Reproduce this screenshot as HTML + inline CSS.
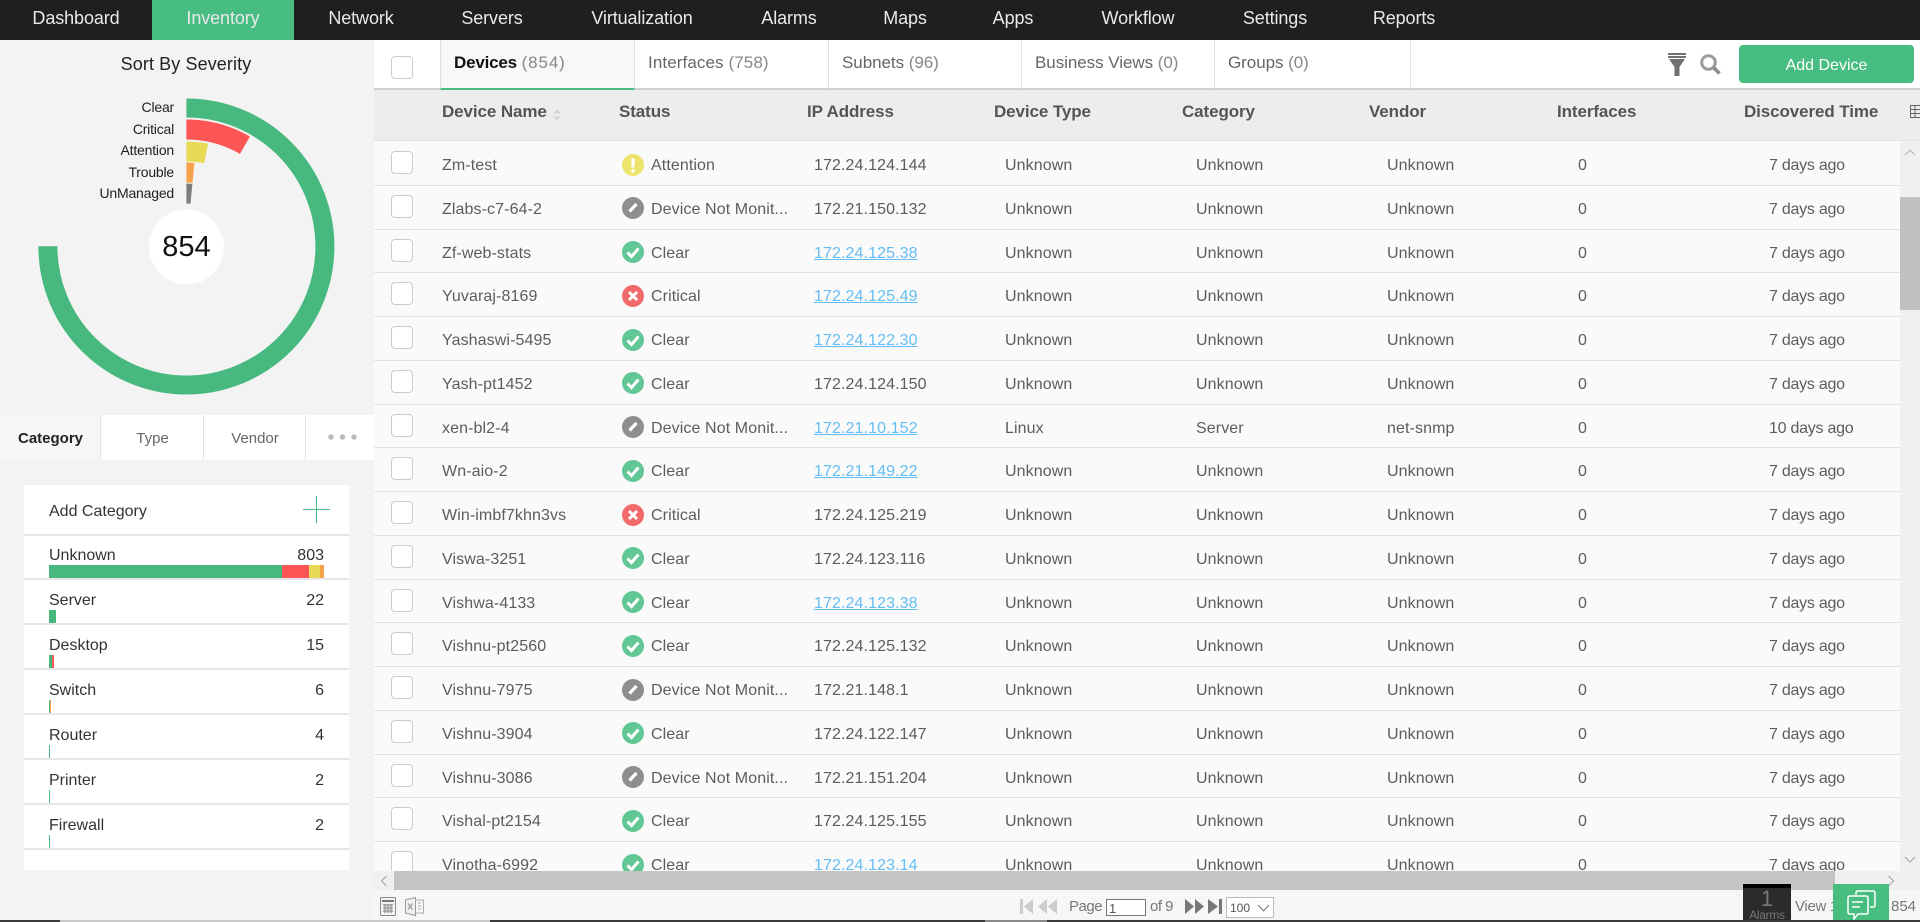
<!DOCTYPE html>
<html><head><meta charset="utf-8"><title>Inventory</title>
<style>
*{box-sizing:border-box}
html,body{margin:0;padding:0;width:1920px;height:922px;overflow:hidden;background:#f5f5f5;font-family:"Liberation Sans",sans-serif;color:#555}
.abs{position:absolute;white-space:nowrap}
#nav{left:0;top:0;width:1920px;height:40px;background:#1f1f1f}
#nav span{position:absolute;top:0;height:40px;line-height:37px;font-size:18px;color:#e9e9e9;transform:translateX(-50%);letter-spacing:-.1px}
#inv{position:absolute;left:152px;top:0;width:142px;height:40px;background:#48bd81}
#left{left:0;top:40px;width:374px;height:882px;background:#f3f3f3}
.lbl{position:absolute;right:1746px;font-size:14px;line-height:16px;color:#222;letter-spacing:-.2px}
.tab2{position:absolute;top:415px;height:45px;line-height:48px;text-align:center;font-size:15px;background:#fff;color:#666;border-left:1px solid #e4e4e4}
#card{position:absolute;left:24px;top:485px;width:325px;height:385px;background:#fff}
.cr{position:absolute;left:0;width:325px;height:45px;border-bottom:2px solid #e6e6ea}
.cr b{position:absolute;left:25px;top:12px;font-weight:normal;font-size:16px;line-height:18px;color:#333}
.cr i{position:absolute;right:25px;top:12px;font-style:normal;font-size:16px;line-height:18px;color:#333}
.cr u{position:absolute;bottom:0;height:13px;display:block}
.g{background:#47b97f}.re{background:#fb5655}.y{background:#e8d957}.o{background:#f5a24a}
#top{left:374px;top:40px;width:1546px;height:50px;background:#fff;border-bottom:2px solid #cfcfcf}
.tb1{position:absolute;top:40px;height:49px;border-right:1px solid #e0e0e0;font-size:17px;line-height:46px;color:#666;padding-left:13px;letter-spacing:-.05px}
.tb1 em{font-style:normal;color:#888}
.cb{position:absolute;width:22px;height:23px;border:1.5px solid #ccc;border-radius:4px;background:#fff}
#hd{left:374px;top:90px;width:1546px;height:51px;background:#ededed;border-bottom:1px solid #e2e2e2}
#hd span{position:absolute;top:12px;font-size:17px;line-height:20px;font-weight:bold;color:#555;letter-spacing:-.1px;white-space:nowrap}
#tb{position:absolute;left:374px;top:141px;width:1526px;height:730px;overflow:hidden;background:#fafafa}
.r{position:absolute;left:0;width:1526px;height:43.75px;border-bottom:1.5px solid #e2e2e6;font-size:16px;line-height:47px;color:#5c5c5c;letter-spacing:.1px}
.r>span,.r>a{position:absolute;top:0;white-space:nowrap}
.r>svg{position:absolute;left:248px;top:11.500px;width:22px;height:22px}
.r .cb{left:17px;top:9px}
.r a{color:#64bdf4;text-decoration:underline}
.n{left:68px}.s{left:277px}.ip{left:440px}.d{left:631px}.c{left:822px}.v{left:1013px}.f{left:1204px}.t{left:1395px;letter-spacing:-.25px}
#foot{left:374px;top:890px;width:1546px;height:30px;background:#f6f6f6;font-size:15px;color:#777}
</style></head><body>
<svg width="0" height="0" style="position:absolute"><defs>
<symbol id="ok" viewBox="0 0 22 22"><circle cx="11" cy="11" r="11" fill="#61c795"/><path d="M5.500 11.500l4 4 7-8" fill="none" stroke="#fff" stroke-width="3"/></symbol>
<symbol id="cr" viewBox="0 0 22 22"><circle cx="11" cy="11" r="11" fill="#f16a6a"/><path d="M7 7l8 8M15 7l-8 8" fill="none" stroke="#fff" stroke-width="3"/></symbol>
<symbol id="at" viewBox="0 0 22 22"><circle cx="11" cy="11" r="11" fill="#ece46c"/><path d="M11 4.500v9" stroke="#fff" stroke-width="3.200"/><circle cx="11" cy="17" r="1.800" fill="#fff"/></symbol>
<symbol id="nm" viewBox="0 0 22 22"><circle cx="11" cy="11" r="11" fill="#8e8e8e"/><path d="M7.500 14.500l7-7.500" fill="none" stroke="#fff" stroke-width="3.200"/></symbol>
</defs></svg>

<div id="nav" class="abs"><div id="inv"></div>
<span style="left:76px">Dashboard</span><span style="left:223px">Inventory</span><span style="left:361px">Network</span><span style="left:492px">Servers</span><span style="left:642px">Virtualization</span><span style="left:789px">Alarms</span><span style="left:905px">Maps</span><span style="left:1013px">Apps</span><span style="left:1138px">Workflow</span><span style="left:1275px">Settings</span><span style="left:1404px">Reports</span>
</div>

<div id="left" class="abs"></div>
<div class="abs" style="left:0;width:372px;text-align:center;top:54px;font-size:18px;line-height:21px;color:#222;letter-spacing:.1px">Sort By Severity</div>
<svg class="abs" style="left:0;top:80px" width="374" height="330" viewBox="0 80 374 330">
<g fill="none" transform="rotate(-90 186.400 246.500)">
<circle cx="186.400" cy="246.500" r="138.500" stroke="#47b97f" stroke-width="19" stroke-dasharray="652.600 900"/>
<circle cx="186.400" cy="246.500" r="117" stroke="#fb5655" stroke-width="20" stroke-dasharray="61.300 900"/>
<circle cx="186.400" cy="246.500" r="95" stroke="#e8d957" stroke-width="20" stroke-dasharray="19.900 900"/>
<circle cx="186.400" cy="246.500" r="74" stroke="#f5a24a" stroke-width="20" stroke-dasharray="7.100 900"/>
<circle cx="186.400" cy="246.500" r="53" stroke="#7d7d7d" stroke-width="20" stroke-dasharray="5.100 900"/>
</g>
<circle cx="186.400" cy="247" r="37.500" fill="#fff"/>
</svg>
<div class="abs" style="left:139px;width:95px;text-align:center;top:230px;font-size:29px;line-height:34px;color:#111">854</div>
<span class="lbl" style="top:99px">Clear</span>
<span class="lbl" style="top:121px">Critical</span>
<span class="lbl" style="top:142px">Attention</span>
<span class="lbl" style="top:164px">Trouble</span>
<span class="lbl" style="top:185px">UnManaged</span>

<div class="tab2" style="left:0;width:101px;background:#f7f7f7;border:0;color:#222;font-weight:bold">Category</div>
<div class="tab2" style="left:100px;width:104px">Type</div>
<div class="tab2" style="left:203px;width:103px">Vendor</div>
<div class="tab2" style="left:305px;width:69px">
<svg width="32" height="8" style="position:absolute;left:21px;top:18px"><circle cx="4" cy="4" r="2.700" fill="#b9b9bf"/><circle cx="15.500" cy="4" r="2.700" fill="#b9b9bf"/><circle cx="27" cy="4" r="2.700" fill="#b9b9bf"/></svg></div>

<div id="card">
<div class="cr" style="top:0;height:51px"><b style="top:18px">Add Category</b>
<svg width="27" height="27" style="position:absolute;left:279px;top:11px"><path d="M13.500 0v27M0 13.500h27" stroke="#47b97f" stroke-width="1"/></svg></div>
<div class="cr" style="top:50px"><b>Unknown</b><i>803</i><u class="g" style="left:25px;width:233px"></u><u class="re" style="left:258px;width:27px"></u><u class="y" style="left:285px;width:11px"></u><u class="o" style="left:296px;width:4px"></u></div>
<div class="cr" style="top:95px"><b>Server</b><i>22</i><u class="g" style="left:25px;width:7px"></u></div>
<div class="cr" style="top:140px"><b>Desktop</b><i>15</i><u class="g" style="left:25px;width:3px"></u><u class="re" style="left:28px;width:2px"></u></div>
<div class="cr" style="top:185px"><b>Switch</b><i>6</i><u class="g" style="left:25px;width:1px"></u><u class="o" style="left:26px;width:1px"></u></div>
<div class="cr" style="top:230px"><b>Router</b><i>4</i><u class="g" style="left:25px;width:1px"></u></div>
<div class="cr" style="top:275px"><b>Printer</b><i>2</i><u class="g" style="left:25px;width:1px"></u></div>
<div class="cr" style="top:320px"><b>Firewall</b><i>2</i><u class="g" style="left:25px;width:1px"></u></div>
</div>

<div id="top" class="abs"></div>
<div class="cb" style="left:391px;top:56px"></div>
<div class="tb1" style="left:440px;width:195px;background:#f8f8f8;border-left:1px solid #e0e0e0;border-bottom:2px solid #47bd80;height:50px;color:#111"><b style="letter-spacing:-.2px">Devices</b> <em style="letter-spacing:.9px">(854)</em></div>
<div class="tb1" style="left:635px;width:194px;letter-spacing:.1px"><span>Interfaces</span> <em>(758)</em></div>
<div class="tb1" style="left:829px;width:193px">Subnets <em>(96)</em></div>
<div class="tb1" style="left:1022px;width:193px">Business Views <em>(0)</em></div>
<div class="tb1" style="left:1215px;width:196px">Groups <em>(0)</em></div>
<svg class="abs" style="left:1668px;top:53px" width="18" height="24" viewBox="0 0 18 24"><path d="M0 0h18v2H0zM0 3h18v2H0zM1 6h16l-5.500 8v9h-5v-9z" fill="#707070"/></svg>
<svg class="abs" style="left:1700px;top:54px" width="21" height="21" viewBox="0 0 21 21"><circle cx="8.500" cy="8.500" r="6.800" fill="none" stroke="#9c9c9c" stroke-width="3"/><path d="M13.500 13.500l6 6" stroke="#8d8d8d" stroke-width="3.600"/></svg>
<div class="abs" style="left:1739px;top:45px;width:175px;height:38px;background:#48bd81;border-radius:4px;color:#fff;font-size:16px;line-height:41px;text-align:center">Add Device</div>

<div id="hd" class="abs">
<span style="left:68px">Device Name</span>
<svg width="10" height="12" style="position:absolute;left:178px;top:19px"><path d="M5 0l4 4.500H1zM5 12L1 7.500h8z" fill="#d6d6d6"/></svg>
<span style="left:245px">Status</span><span style="left:433px">IP Address</span><span style="left:620px">Device Type</span><span style="left:808px">Category</span><span style="left:995px">Vendor</span><span style="left:1183px">Interfaces</span><span style="left:1370px">Discovered Time</span>
<svg width="10" height="14" style="position:absolute;left:1536px;top:15px"><path d="M.5.5h12v12H.5zM.5 4.500h12M.5 8.500h12M5 .5v12" fill="none" stroke="#666"/></svg>
</div>

<div id="tb">
<div class="r" style="top:1px"><div class="cb"></div><span class="n">Zm-test</span><svg><use href="#at"/></svg><span class="s">Attention</span><span class="ip">172.24.124.144</span><span class="d">Unknown</span><span class="c">Unknown</span><span class="v">Unknown</span><span class="f">0</span><span class="t">7 days ago</span></div>
<div class="r" style="top:44.750px"><div class="cb"></div><span class="n">Zlabs-c7-64-2</span><svg><use href="#nm"/></svg><span class="s">Device Not Monit...</span><span class="ip">172.21.150.132</span><span class="d">Unknown</span><span class="c">Unknown</span><span class="v">Unknown</span><span class="f">0</span><span class="t">7 days ago</span></div>
<div class="r" style="top:88.500px"><div class="cb"></div><span class="n">Zf-web-stats</span><svg><use href="#ok"/></svg><span class="s">Clear</span><a class="ip">172.24.125.38</a><span class="d">Unknown</span><span class="c">Unknown</span><span class="v">Unknown</span><span class="f">0</span><span class="t">7 days ago</span></div>
<div class="r" style="top:132.250px"><div class="cb"></div><span class="n">Yuvaraj-8169</span><svg><use href="#cr"/></svg><span class="s">Critical</span><a class="ip">172.24.125.49</a><span class="d">Unknown</span><span class="c">Unknown</span><span class="v">Unknown</span><span class="f">0</span><span class="t">7 days ago</span></div>
<div class="r" style="top:176px"><div class="cb"></div><span class="n">Yashaswi-5495</span><svg><use href="#ok"/></svg><span class="s">Clear</span><a class="ip">172.24.122.30</a><span class="d">Unknown</span><span class="c">Unknown</span><span class="v">Unknown</span><span class="f">0</span><span class="t">7 days ago</span></div>
<div class="r" style="top:219.750px"><div class="cb"></div><span class="n">Yash-pt1452</span><svg><use href="#ok"/></svg><span class="s">Clear</span><span class="ip">172.24.124.150</span><span class="d">Unknown</span><span class="c">Unknown</span><span class="v">Unknown</span><span class="f">0</span><span class="t">7 days ago</span></div>
<div class="r" style="top:263.500px"><div class="cb"></div><span class="n">xen-bl2-4</span><svg><use href="#nm"/></svg><span class="s">Device Not Monit...</span><a class="ip">172.21.10.152</a><span class="d">Linux</span><span class="c">Server</span><span class="v">net-snmp</span><span class="f">0</span><span class="t">10 days ago</span></div>
<div class="r" style="top:307.250px"><div class="cb"></div><span class="n">Wn-aio-2</span><svg><use href="#ok"/></svg><span class="s">Clear</span><a class="ip">172.21.149.22</a><span class="d">Unknown</span><span class="c">Unknown</span><span class="v">Unknown</span><span class="f">0</span><span class="t">7 days ago</span></div>
<div class="r" style="top:351px"><div class="cb"></div><span class="n">Win-imbf7khn3vs</span><svg><use href="#cr"/></svg><span class="s">Critical</span><span class="ip">172.24.125.219</span><span class="d">Unknown</span><span class="c">Unknown</span><span class="v">Unknown</span><span class="f">0</span><span class="t">7 days ago</span></div>
<div class="r" style="top:394.750px"><div class="cb"></div><span class="n">Viswa-3251</span><svg><use href="#ok"/></svg><span class="s">Clear</span><span class="ip">172.24.123.116</span><span class="d">Unknown</span><span class="c">Unknown</span><span class="v">Unknown</span><span class="f">0</span><span class="t">7 days ago</span></div>
<div class="r" style="top:438.500px"><div class="cb"></div><span class="n">Vishwa-4133</span><svg><use href="#ok"/></svg><span class="s">Clear</span><a class="ip">172.24.123.38</a><span class="d">Unknown</span><span class="c">Unknown</span><span class="v">Unknown</span><span class="f">0</span><span class="t">7 days ago</span></div>
<div class="r" style="top:482.250px"><div class="cb"></div><span class="n">Vishnu-pt2560</span><svg><use href="#ok"/></svg><span class="s">Clear</span><span class="ip">172.24.125.132</span><span class="d">Unknown</span><span class="c">Unknown</span><span class="v">Unknown</span><span class="f">0</span><span class="t">7 days ago</span></div>
<div class="r" style="top:526px"><div class="cb"></div><span class="n">Vishnu-7975</span><svg><use href="#nm"/></svg><span class="s">Device Not Monit...</span><span class="ip">172.21.148.1</span><span class="d">Unknown</span><span class="c">Unknown</span><span class="v">Unknown</span><span class="f">0</span><span class="t">7 days ago</span></div>
<div class="r" style="top:569.750px"><div class="cb"></div><span class="n">Vishnu-3904</span><svg><use href="#ok"/></svg><span class="s">Clear</span><span class="ip">172.24.122.147</span><span class="d">Unknown</span><span class="c">Unknown</span><span class="v">Unknown</span><span class="f">0</span><span class="t">7 days ago</span></div>
<div class="r" style="top:613.500px"><div class="cb"></div><span class="n">Vishnu-3086</span><svg><use href="#nm"/></svg><span class="s">Device Not Monit...</span><span class="ip">172.21.151.204</span><span class="d">Unknown</span><span class="c">Unknown</span><span class="v">Unknown</span><span class="f">0</span><span class="t">7 days ago</span></div>
<div class="r" style="top:657.250px"><div class="cb"></div><span class="n">Vishal-pt2154</span><svg><use href="#ok"/></svg><span class="s">Clear</span><span class="ip">172.24.125.155</span><span class="d">Unknown</span><span class="c">Unknown</span><span class="v">Unknown</span><span class="f">0</span><span class="t">7 days ago</span></div>
<div class="r" style="top:701px"><div class="cb"></div><span class="n">Vinotha-6992</span><svg><use href="#ok"/></svg><span class="s">Clear</span><a class="ip">172.24.123.14</a><span class="d">Unknown</span><span class="c">Unknown</span><span class="v">Unknown</span><span class="f">0</span><span class="t">7 days ago</span></div>
</div>

<!-- vertical scrollbar -->
<div class="abs" style="left:1900px;top:141px;width:20px;height:730px;background:#f0f0f0"></div>
<div class="abs" style="left:1900px;top:197px;width:20px;height:113px;background:#c1c1c1"></div>
<svg class="abs" style="left:1904px;top:148px" width="12" height="8"><path d="M1 7l5-5 5 5" fill="none" stroke="#b5b5b5"/></svg>
<svg class="abs" style="left:1904px;top:856px" width="12" height="8"><path d="M1 1l5 5 5-5" fill="none" stroke="#a5a5a5"/></svg>
<!-- horizontal scrollbar -->
<div class="abs" style="left:374px;top:871px;width:1546px;height:19px;background:#f0f0f0"></div>
<div class="abs" style="left:394px;top:871px;width:1441px;height:19px;background:#c3c4c3"></div>
<svg class="abs" style="left:380px;top:875px" width="8" height="12"><path d="M6.500 1l-5 5 5 5" fill="none" stroke="#a0a0a0"/></svg>
<svg class="abs" style="left:1887px;top:875px" width="8" height="12"><path d="M1.500 1l5 5-5 5" fill="none" stroke="#a0a0a0"/></svg>

<!-- footer -->
<div id="foot" class="abs"></div>
<svg class="abs" style="left:380px;top:897px" width="16" height="19" viewBox="0 0 16 19"><rect x=".5" y=".5" width="15" height="18" rx="1" fill="#f4f4f4" stroke="#8a8a8a"/><path d="M2 3h12v2H2z" fill="#777"/><path d="M3 8h10M3 11h10M3 14h10M5 7v9M8 7v9M11 7v9" stroke="#999" stroke-width="1.400"/></svg>
<svg class="abs" style="left:405px;top:897px" width="19" height="19" viewBox="0 0 19 19"><path d="M.5 3l10-2.500v18L.5 16z" fill="#f0f0f0" stroke="#999"/><path d="M10.500 3h8v13h-8M13 6h3M13 9h3M13 12h3" fill="none" stroke="#aaa"/><path d="M3 6.500l4.500 6M7.500 6.500L3 12.500" stroke="#999" stroke-width="1.200"/></svg>
<svg class="abs" style="left:1020px;top:898px" width="38" height="17" viewBox="0 0 38 17"><path d="M0 1h3v15H0zM13 1v15L4 8.500zM27 1v15l-9-7.500zM37 1v15l-9-7.500z" fill="#ccc"/></svg>
<div class="abs" style="left:1069px;top:897px;font-size:15px;line-height:20px;color:#777;letter-spacing:-.5px">Page</div>
<div class="abs" style="left:1106px;top:899px;width:40px;height:17px;background:#fff;border:1px solid #777;font-size:13px;line-height:17px;padding-left:2px;color:#555">1</div>
<div class="abs" style="left:1150px;top:897px;font-size:15px;line-height:20px;color:#777;letter-spacing:-.5px">of 9</div>
<svg class="abs" style="left:1185px;top:898px" width="39" height="17" viewBox="0 0 39 17"><path d="M0 1v15l9-7.500zM10 1v15l9-7.500zM23 1v15l10-7.500zM34 1h3v15h-3z" fill="#777"/></svg>
<div class="abs" style="left:1226px;top:897px;width:48px;height:21px;background:#fff;border:1px solid #bbb;font-size:12px;line-height:20px;padding-left:3px;color:#555">100
<svg style="position:absolute;left:30px;top:6px" width="13" height="8"><path d="M1 1l5.500 6 5.500-6" fill="none" stroke="#777"/></svg></div>
<div class="abs" style="left:1795px;top:897px;font-size:15px;line-height:20px;color:#777;letter-spacing:-.3px">View 1</div>
<div class="abs" style="left:1891px;top:897px;font-size:15px;line-height:20px;color:#777">854</div>
<div class="abs" style="left:1743px;top:884px;width:48px;height:38px;background:#2b2b2b;border-top:4px solid #000;text-align:center;color:#777">
<div style="font-size:22px;line-height:22px;font-weight:normal">1</div><div style="font-size:12px;line-height:11px;letter-spacing:-.3px">Alarms</div></div>
<div class="abs" style="left:1833px;top:884px;width:56px;height:38px;background:#47bd80">
<svg style="position:absolute;left:14px;top:6px" width="29" height="30" viewBox="0 0 29 30"><path d="M9 5V3q0-2 2-2h15q2 0 2 2v12q0 2-2 2h-3" fill="none" stroke="#fff" stroke-width="1.500"/><path d="M3 6h16q2 0 2 2v14q0 2-2 2h-8l-4 5v-5H3q-2 0-2-2V8q0-2 2-2z" fill="#47bd80" stroke="#fff" stroke-width="1.500"/><path d="M5 12h11M5 17h8" stroke="#fff" stroke-width="1.500"/></svg></div>

<!-- bottom strip -->
<div class="abs" style="left:0;top:920px;width:1920px;height:2px;background:#3c3c3c"></div>
<div class="abs" style="left:60px;top:920px;width:430px;height:2px;background:#c9c9c9"></div>
<div class="abs" style="left:985px;top:920px;width:62px;height:2px;background:#8a8a8a"></div>
</body></html>
